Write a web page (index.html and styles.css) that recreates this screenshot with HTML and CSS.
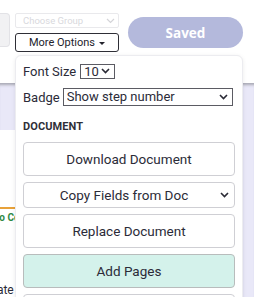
FILE: index.html
```html
<!DOCTYPE html>
<html>
<head>
<meta charset="utf-8">
<link rel="stylesheet" href="styles.css">
</head>
<body>
<div class="page">
  <div class="topbar">
    <div class="tab-stub"></div>
    <div class="group-col">
      <div class="select-wrap group-select">
        <select disabled><option>Choose Group</option></select>
        <svg class="chev" width="9" height="6" viewBox="0 0 9 6"><path d="M1 1l3.5 3.5L8 1" fill="none" stroke="#d4d4d8" stroke-width="1.2"/></svg>
      </div>
      <button class="more-btn">More Options <span class="caret"></span></button>
    </div>
    <button class="saved-btn">Saved</button>
  </div>
  <div class="workspace">
    <div class="canvas">
      <div class="canvas-head"></div>
      <div class="canvas-body">
        <div class="orange-rule"></div>
        <div class="green-label">to Complete</div>
        <div class="dark-label">Date</div>
      </div>
    </div>
    <div class="sidebar"></div>
  </div>

  <div class="menu">
    <div class="field-row">
      <label class="field-label">Font Size</label>
      <div class="select-wrap small-select">
        <select><option>10</option></select>
        <svg class="chev" width="9" height="6" viewBox="0 0 9 6"><path d="M1 1l3.5 3.5L8 1" fill="none" stroke="#2a2a35" stroke-width="1.6"/></svg>
      </div>
    </div>
    <div class="field-row badge-row">
      <label class="field-label">Badge</label>
      <div class="select-wrap badge-select">
        <select><option>Show step number</option></select>
        <svg class="chev" width="9" height="6" viewBox="0 0 9 6"><path d="M1 1l3.5 3.5L8 1" fill="none" stroke="#2a2a35" stroke-width="1.6"/></svg>
      </div>
    </div>
    <div class="section-title">DOCUMENT</div>
    <div class="actions">
      <button class="action">Download Document</button>
      <div class="select-wrap action-select">
        <select><option>Copy Fields from Doc</option></select>
        <svg class="chev" width="9" height="6" viewBox="0 0 9 6"><path d="M1 1l3.5 3.5L8 1" fill="none" stroke="#2a2a35" stroke-width="1.6"/></svg>
      </div>
      <button class="action">Replace Document</button>
      <button class="action action-mint">Add Pages</button>
      <button class="action"></button>
    </div>
  </div>
</div>
</body>
</html>
```

FILE: styles.css
```css
* { box-sizing: border-box; }
html, body { margin: 0; padding: 0; background: #fff; }
body { font-family: Roboto, "Liberation Sans", sans-serif; color: #2b2b38; }
.page { position: relative; width: 254px; height: 297px; overflow: hidden; }

.topbar { display: flex; align-items: flex-start; height: 83px; }
.tab-stub { width: 10px; height: 34px; margin-top: 13px; background: #f1f1f3; border: 1px solid #e2e2e6; border-left: none; border-radius: 0 4px 4px 0; }
.group-col { width: 104px; margin-left: 5px; margin-top: 13px; display: flex; flex-direction: column; gap: 5px; }

.select-wrap { position: relative; }
.select-wrap select { appearance: none; -webkit-appearance: none; display: block; width: 100%; margin: 0; background: #fff; font-family: Roboto, "Liberation Sans", sans-serif; color: #2b2b38; outline: none; }
.select-wrap .chev { position: absolute; top: 50%; transform: translateY(-50%); pointer-events: none; }

.group-select select { height: 15px; border: 1px solid #e0e0e4; border-radius: 2px; font-size: 9.5px; color: #c9c9cf; padding: 0 0 0 7px; line-height: 13px; }
.group-select .chev { right: 4px; }

.more-btn { height: 19px; padding: 0; margin: 0; border: 1px solid #2e2e36; border-radius: 3px; background: #fff; font-family: Roboto, "Liberation Sans", sans-serif; font-size: 11px; color: #23232c; display: flex; align-items: center; justify-content: center; gap: 4px; }
.caret { width: 0; height: 0; border-left: 3px solid transparent; border-right: 3px solid transparent; border-top: 3px solid #23232c; margin-top: 1px; }

.saved-btn { margin-left: 9px; margin-top: 17px; width: 115px; height: 31px; border: none; border-radius: 16px; background: #b4b9dc; color: #fff; font-family: "Open Sans", Inter, sans-serif; font-weight: 700; font-size: 13.5px; padding: 0; }

.workspace { display: flex; height: 214px; }
.canvas { width: 243px; display: flex; flex-direction: column; }
.canvas-head { height: 54px; background: #e9e8f8; box-shadow: inset 0 4px 3px -2px #a9a9b4; }
.canvas-body { flex: 1; position: relative; padding-top: 77px; }
.orange-rule { height: 2px; background: #e8a23a; }
.green-label { margin-top: 3px; margin-left: -4px; font-size: 10px; font-weight: 700; color: #2f8a46; line-height: 12px; }
.dark-label { margin-top: 59px; margin-left: -11px; font-size: 12px; color: #2b2b38; line-height: 14px; }
.sidebar { flex: 1; background: #e9e8f8; box-shadow: inset 0 4px 3px -2px #a9a9b4; }

.menu { position: absolute; left: 15px; top: 55px; width: 228px; height: 260px; background: #fff; border: 1px solid #ececf0; border-radius: 6px; box-shadow: 0 1px 4px rgba(0,0,0,0.08); padding: 7px 7px 0 7px; }
.field-row { display: flex; align-items: center; gap: 3px; height: 16px; }
.field-label { font-size: 13px; color: #2b2b38; }
.small-select { width: 35px; margin-left: 1px; }
.small-select select { height: 15px; border: 1px solid #5b5b63; border-radius: 0; font-size: 13px; padding: 0 0 0 3px; line-height: 13px; }
.small-select .chev { right: 5px; }
.badge-row { margin-top: 9px; height: 18px; }
.badge-select { width: 170px; }
.badge-select select { height: 18px; border: 1px solid #5b5b63; border-radius: 0; font-size: 13px; padding: 0 0 0 3px; line-height: 16px; }
.badge-select .chev { right: 5px; }

.section-title { margin-top: 14px; font-size: 11px; font-weight: 700; color: #2f2f38; line-height: 13px; letter-spacing: 0.1px; }

.actions { margin-top: 9px; display: flex; flex-direction: column; gap: 6px; }
.action { height: 34px; width: 100%; margin: 0; padding: 0; background: #fff; border: 1px solid #cfcfd4; border-radius: 4px; font-family: Roboto, "Liberation Sans", sans-serif; font-size: 13.5px; color: #2b2b38; flex-shrink: 0; }
.action-mint { background: #d4f2eb; border-color: #b8bcbc; }
.action-select select { height: 26px; border: 1px solid #cfcfd4; border-radius: 4px; font-size: 13.5px; text-align: center; text-align-last: center; padding: 0 10px 0 0; }
.action-select .chev { right: 6px; }
```
